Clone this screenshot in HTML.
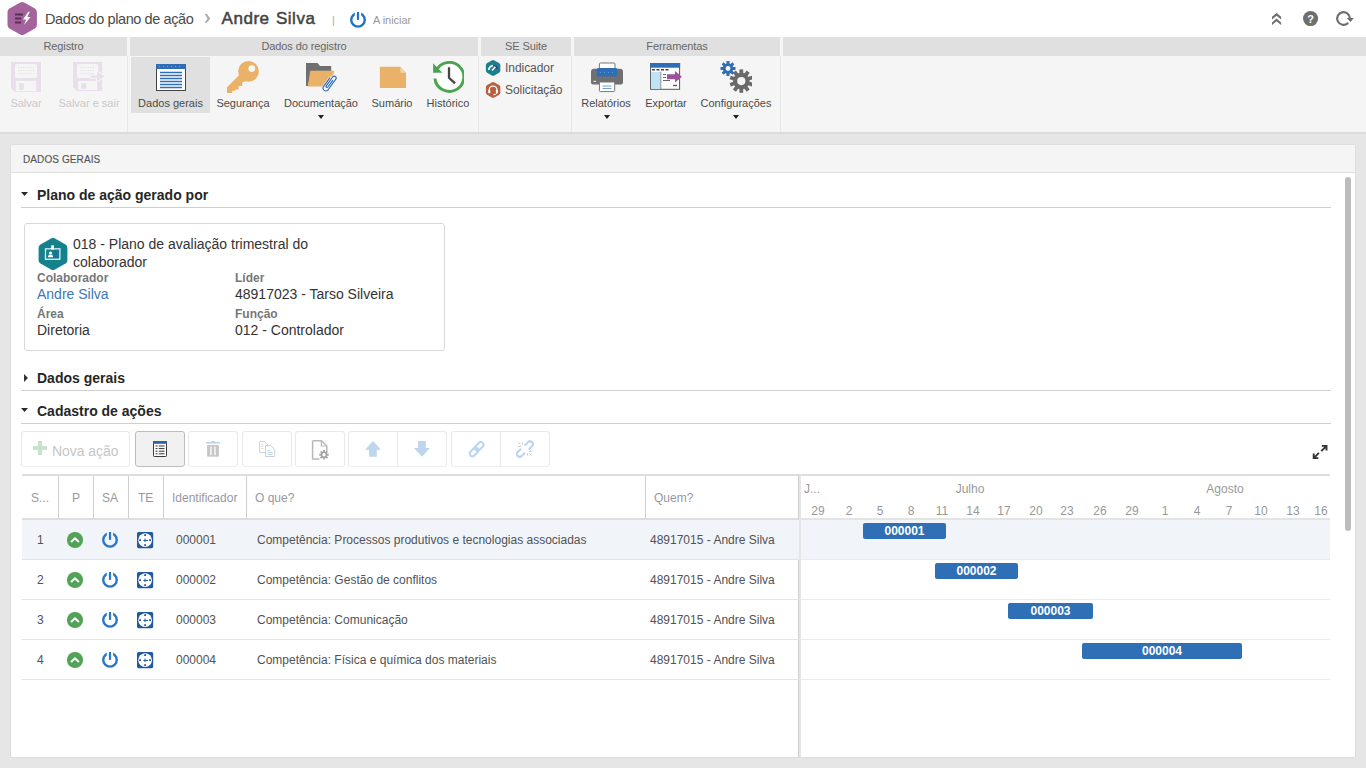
<!DOCTYPE html>
<html lang="pt-BR">
<head>
<meta charset="utf-8">
<title>Dados do plano de ação</title>
<style>
*{box-sizing:border-box;margin:0;padding:0}
html,body{width:1366px;height:768px;overflow:hidden}
body{background:#e6e6e6;font-family:"Liberation Sans",Arial,sans-serif;color:#333;position:relative;font-size:12px}
.abs{position:absolute}
/* top bar */
#top{position:absolute;left:0;top:0;width:1366px;height:37px;background:#fff}
#top .t1{position:absolute;left:45px;top:10px;font-size:14.5px;color:#4a4a4a;white-space:nowrap;line-height:18px;letter-spacing:-.4px}
#top .t2{position:absolute;left:221.5px;top:9px;font-size:17px;color:#444;-webkit-text-stroke:.5px #444;white-space:nowrap;line-height:20px;letter-spacing:.55px;word-spacing:1px}
#top .sep{position:absolute;left:332px;top:13px;font-size:11px;color:#aaa;line-height:14px}
#top .st{position:absolute;left:373px;top:13px;font-size:11px;color:#999;line-height:14px;letter-spacing:-.05px}
/* ribbon */
#rib{position:absolute;left:0;top:37px;width:1366px;height:95px;background:#f5f5f5}
#ribline{position:absolute;left:0;top:132px;width:1366px;height:2px;background:#dcdcdc}
.gh{position:absolute;top:0;height:19px;background:#e0e0e0;color:#666;font-size:11px;line-height:19px;text-align:center;letter-spacing:-.1px}
.gsep{position:absolute;top:19px;width:1px;height:76px;background:#e6e6e6}
.rb{position:absolute;top:20px;height:56px;text-align:center;font-size:11px;color:#4a4a4a;white-space:nowrap;letter-spacing:0}
.rb .lb{position:absolute;left:0;right:0;top:39px;line-height:14px}
.rb svg{position:absolute;left:50%;margin-left:-16px;top:4px;width:32px;height:32px}
.rb.dis{color:#c9c9c9}
.rb.sel{background:#e0e0e0}
.dd{position:absolute;top:78px;width:0;height:0;border-left:3px solid transparent;border-right:3px solid transparent;border-top:4px solid #222}
.sm{position:absolute;font-size:12px;color:#555;line-height:16px;white-space:nowrap;letter-spacing:-.05px}
/* panel */
#panel{position:absolute;left:10px;top:144px;width:1346px;height:614px;background:#fff;border:1px solid #dddddd;border-radius:2px}
#phead{position:absolute;left:0;top:0;width:1344px;height:28px;background:#f5f5f5;border-bottom:1px solid #dedede;font-size:10px;color:#555;-webkit-text-stroke:.15px #555;line-height:29px;padding-left:12px;letter-spacing:.1px}
.sec{position:absolute;left:21px;width:1310px;height:1px;background:#cfcfcf}
.sect{position:absolute;left:37px;font-size:14px;font-weight:bold;color:#262626;line-height:18px;white-space:nowrap}
.tri-d{position:absolute;width:7px;height:4px;background:#2a2a2a;clip-path:polygon(0 0,100% 0,50% 100%)}
.tri-r{position:absolute;width:0;height:0;border-top:4px solid transparent;border-bottom:4px solid transparent;border-left:4px solid #333}
#card{position:absolute;left:24px;top:223px;width:421px;height:128px;border:1px solid #d9d9d9;border-radius:3px;background:#fff}
.cl{position:absolute;font-size:12px;font-weight:bold;color:#777;line-height:14px;white-space:nowrap}
.cv{position:absolute;font-size:14px;color:#333;line-height:18px;white-space:nowrap}
/* toolbar */
.tb{position:absolute;top:431px;height:36px;border:1px solid #e9e9e9;border-bottom-color:#efefef;border-radius:3px;background:#fff}
/* grid */
.hl{position:absolute;background:#dedede}
.th{position:absolute;top:491px;font-size:12px;color:#969aa0;line-height:14px;white-space:nowrap}
.vs{position:absolute;top:476px;width:1px;height:42px;background:#cfcfcf}
.row{position:absolute;left:22px;width:777px;height:40px;border-bottom:1px solid #e4e4e4}
.td{position:absolute;font-size:12px;color:#525252;line-height:14px;white-space:nowrap}
.gl{position:absolute;font-size:12px;color:#999;line-height:14px;white-space:nowrap;text-align:center}
.bar{position:absolute;height:16px;background:#2e6fb5;border-radius:2px;color:#fff;font-size:12px;font-weight:bold;line-height:16px;text-align:center}
</style>
</head>
<body>
<div id="top">

  <svg class="abs" style="left:7px;top:1px" width="31" height="35" viewBox="0 0 31 35">
    <path d="M13.200 1.500 Q15.200 0.400 17.200 1.500 L27.900 7.600 Q29.900 8.800 29.900 11 V24 Q29.900 26.200 27.900 27.400 L17.200 33.500 Q15.200 34.600 13.200 33.500 L2.500 27.400 Q0.500 26.200 0.500 24 V11 Q0.500 8.800 2.500 7.600 Z" fill="#a4639c"/>
    <rect x="8" y="12.500" width="8" height="2" fill="#5c2f57"/>
    <rect x="8" y="16.500" width="6.300" height="2" fill="#5c2f57"/>
    <rect x="8" y="20.500" width="6.300" height="2" fill="#5c2f57"/>
    <path d="M21.200 10.800 L16 18.500 H19.200 L17 24 L23.600 16 H20.400 L22.800 10.800 Z" fill="#fff"/>
  </svg>
  <svg class="abs" style="left:204px;top:14px" width="8" height="10" viewBox="0 0 8 10"><path d="M0.600 0 L3 0 L6.200 4.400 L3 8.800 L0.600 8.800 L3.500 4.400 Z" fill="#adadad"/></svg>
  <svg class="abs" style="left:350px;top:12px" width="16" height="16" viewBox="0 0 16 16">
    <defs><clipPath id="pc"><path d="M0 0H4.840V8H11.100V0H16V16H0Z"/></clipPath></defs>
    <circle cx="8" cy="7.900" r="6.750" fill="none" stroke="#2273c4" stroke-width="2.400" clip-path="url(#pc)"/>
    <rect x="6.900" y="0" width="2.200" height="7.900" fill="#2273c4"/>
  </svg>
  <svg class="abs" style="left:1272px;top:13px" width="10" height="13" viewBox="0 0 10 13">
    <path d="M0 3.800 L4.550 -0.100 L9.100 3.800 V6.600 L4.550 2.700 L0 6.600 Z M0 9.500 L4.550 5.600 L9.100 9.500 V12.100 L4.550 8.300 L0 12.100 Z" fill="#6e6e6e"/>
  </svg>
  <svg class="abs" style="left:1302px;top:10px" width="17" height="17" viewBox="0 0 17 17">
    <circle cx="8.550" cy="8.550" r="7.550" fill="#6e6e6e"/>
    <text x="8.600" y="12.500" font-family="Liberation Sans, sans-serif" font-size="11" font-weight="bold" fill="#fff" text-anchor="middle">?</text>
  </svg>
  <svg class="abs" style="left:1335px;top:10px" width="20" height="18" viewBox="0 0 20 18">
    <path d="M14.900 8.530 A6.350 6.350 0 1 0 12.630 13.390" fill="none" stroke="#6e6e6e" stroke-width="2.200" stroke-linecap="round"/>
    <path d="M11.800 8 H18.800 L15.500 12 Z" fill="#6e6e6e"/>
  </svg>
  <div class="t1">Dados do plano de ação</div>
  <div class="t2">Andre Silva</div>
  <div class="sep">|</div>
  <div class="st">A iniciar</div>
</div>
<div id="rib">
  <div class="gh" style="left:0;width:127px">Registro</div>
  <div class="gh" style="left:130px;width:348px">Dados do registro</div>
  <div class="gh" style="left:481px;width:90px">SE Suite</div>
  <div class="gh" style="left:574px;width:206px">Ferramentas</div>
  <div class="gh" style="left:783px;width:583px"></div>

  <div class="gsep" style="left:127px"></div>
  <div class="gsep" style="left:478px"></div>
  <div class="gsep" style="left:571px"></div>
  <div class="gsep" style="left:780px"></div>

  <div class="rb dis" style="left:4px;width:44px">
    <svg viewBox="0 0 32 32"><path d="M1 1 H31 V31 H5 L1 27 Z" fill="#e9dfec"/><rect x="5" y="2.900" width="22" height="14" rx="2" fill="#f5f5f5"/><path d="M8 6.500H24M8 9.500H24M8 12.500H24" stroke="#e8e2ea" stroke-width="1" stroke-dasharray="1.500 1"/><rect x="5.700" y="19.900" width="20.500" height="10.300" fill="#f5f5f5"/><rect x="9" y="22.100" width="4.800" height="6.700" fill="#e9dfec"/></svg>
    <div class="lb">Salvar</div>
  </div>
  <div class="rb dis" style="left:52px;width:74px">
    <svg viewBox="0 0 34 32" style="left:20px;margin-left:0;width:34px"><path d="M1 1 H30.100 V30 H5 L1 26 Z" fill="#e9dfec"/><rect x="4.950" y="2.900" width="21.200" height="14" rx="2" fill="#f5f5f5"/><path d="M8 6.500H23M8 9.500H23M8 12.500H23" stroke="#e8e2ea" stroke-width="1" stroke-dasharray="1.500 1"/><rect x="6.100" y="19.900" width="19" height="9.100" fill="#f5f5f5"/><rect x="9.100" y="22.100" width="5.100" height="5.700" fill="#e9dfec"/><path d="M18 14 H24.500 V9.700 L33.200 15.400 L24.500 21.100 V17.300 H18 Z" fill="#e9dfec" stroke="#f5f5f5" stroke-width="1"/></svg>
    <div class="lb">Salvar e sair</div>
  </div>

  <div class="rb sel" style="left:131px;width:79px">
    <svg viewBox="0 0 32 32"><rect x="1.500" y="3.500" width="29" height="26" fill="#fff" stroke="#444" stroke-width="1"/><rect x="1" y="3" width="30" height="5" fill="#2f6db5"/><path d="M4 5.500H28" stroke="#6fa0d8" stroke-width="1" stroke-dasharray="1 3"/><path d="M5 11.500H27M5 14.500H27M5 17.500H27M5 20.500H27M5 23.500H27M5 26.500H27" stroke="#2f6db5" stroke-width="1.400"/></svg>
    <div class="lb">Dados gerais</div>
  </div>
  <div class="rb" style="left:212px;width:62px">
    <svg viewBox="0 0 32 32"><path d="M0 26.200 L13 13.200 L19.500 19.500 L15.200 21.500 V25 H11.700 V28.500 H8.200 V29.700 H5.200 V32 H0 Z" fill="#eab268"/><path d="M21.500 0 A10.400 10.400 0 1 0 21.500 20.800 A10.400 10.400 0 1 0 21.500 0 Z M24.800 4.200 A3.400 3.400 0 1 1 24.800 11 A3.400 3.400 0 1 1 24.800 4.200 Z" fill="#eab268" fill-rule="evenodd"/></svg>
    <div class="lb">Segurança</div>
  </div>
  <div class="rb" style="left:276px;width:90px">
    <svg viewBox="0 0 32 32"><path d="M1 2 H12.500 L15 5 H26.200 V11 H6 L3 25 H1 Z" fill="#707070"/><path d="M5.300 9.800 H29.200 L25.500 25.600 H2.800 Z" fill="#eab268"/><g transform="translate(24.700 21.800) rotate(36)" fill="none" stroke-linecap="round"><path d="M-2.800 -4 V6.500 A2.800 2.800 0 0 0 2.800 6.500 V-6.500 A1.900 1.900 0 0 0 -1 -6.500 V4.500 A1 1 0 0 0 1 4.500 V-3.500" stroke="#f5f5f5" stroke-width="2.600"/><path d="M-2.800 -4 V6.500 A2.800 2.800 0 0 0 2.800 6.500 V-6.500 A1.900 1.900 0 0 0 -1 -6.500 V4.500 A1 1 0 0 0 1 4.500 V-3.500" stroke="#2a66b5" stroke-width="1.100"/></g></svg>
    <div class="lb">Documentação</div>
  </div>
  <div class="dd" style="left:318px"></div>
  <div class="rb" style="left:366px;width:52px">
    <svg viewBox="0 0 32 32"><path d="M3.900 5.800 H24.400 L30 11.700 V27 H3.900 Z" fill="#eab268"/><path d="M24.400 5.800 L30 11.700 H24.400 Z" fill="#f3d6a8"/></svg>
    <div class="lb">Sumário</div>
  </div>
  <div class="rb" style="left:420px;width:56px">
    <svg viewBox="0 0 32 32"><circle cx="17.300" cy="15.900" r="14" fill="#fff"/><path d="M4.300 9.500 A14.500 14.500 0 1 1 2.900 17.500" fill="none" stroke="#4ba350" stroke-width="2.900"/><path d="M1.100 2.300 V11.800 H10.400 Z" fill="#4ba350"/><path d="M17 6.300 V16.800 L23 22.300" fill="none" stroke="#454545" stroke-width="2.300"/></svg>
    <div class="lb">Histórico</div>
  </div>

  <svg class="abs" style="left:485px;top:22px" width="16" height="18" viewBox="0 -0.500 16 18"><path d="M6.800 0.900 Q8.100 0.200 9.400 0.900 L14.100 3.600 Q15.300 4.300 15.300 5.700 V11.100 Q15.300 12.500 14.100 13.200 L9.400 15.900 Q8.100 16.600 6.800 15.900 L2.100 13.200 Q0.900 12.500 0.900 11.100 V5.700 Q0.900 4.300 2.100 3.600 Z" fill="#1c7f8c"/><path d="M3.800 10.500 A4.400 4.400 0 0 1 8.200 6.100" fill="none" stroke="#fff" stroke-width="1.600"/><path d="M8.200 6.100 A4.400 4.400 0 0 1 12.400 9.600" fill="none" stroke="#22409a" stroke-width="1.300"/><path d="M7 11 L10.300 7.200" stroke="#fff" stroke-width="1.400"/></svg>
  <div class="sm" style="left:505px;top:23px">Indicador</div>
  <svg class="abs" style="left:485px;top:44px" width="16" height="18" viewBox="0 -0.500 16 18"><path d="M6.800 0.900 Q8.100 0.200 9.400 0.900 L14.100 3.600 Q15.300 4.300 15.300 5.700 V11.100 Q15.300 12.500 14.100 13.200 L9.400 15.900 Q8.100 16.600 6.800 15.900 L2.100 13.200 Q0.900 12.500 0.900 11.100 V5.700 Q0.900 4.300 2.100 3.600 Z" fill="#bb5f42"/><path d="M4.200 10 V8.500 A3.900 3.900 0 0 1 12 8.500 V10" fill="none" stroke="#fff" stroke-width="1.300"/><rect x="3.300" y="8.500" width="2" height="3.200" rx=".5" fill="#fff"/><rect x="10.900" y="8.500" width="2" height="3.200" rx=".5" fill="#fff"/><path d="M11.800 11.500 Q11.300 13.300 8.300 13.300" fill="none" stroke="#fff" stroke-width="1"/></svg>
  <div class="sm" style="left:505px;top:45px">Solicitação</div>

  <div class="rb" style="left:576px;width:60px">
    <svg viewBox="0 0 32 32" style="margin-left:-15px"><rect x="8.400" y="2" width="15.600" height="7" rx="1" fill="#fff" stroke="#777" stroke-width="1"/><path d="M3 7.800 H29 A3 3 0 0 1 32 10.800 V21.500 A2 2 0 0 1 30 23.500 H2 A2 2 0 0 1 0 21.500 V10.800 A3 3 0 0 1 3 7.800 Z" fill="#707070"/><rect x="5.600" y="7" width="20.700" height="8.500" rx="1.500" fill="#2f6db5"/><path d="M9 11.500H24" stroke="#5d93d1" stroke-width="1" stroke-dasharray="1 3"/><rect x="2.500" y="19.800" width="2.500" height="1" fill="#fff"/><rect x="8.400" y="21" width="15.300" height="9.600" rx="1" fill="#fff" stroke="#777" stroke-width="1"/><path d="M11.500 25H20.500M11.500 27.500H20.500" stroke="#6fa0d8" stroke-width="1"/></svg>
    <div class="lb">Relatórios</div>
  </div>
  <div class="dd" style="left:604px"></div>
  <div class="rb" style="left:638px;width:56px">
    <svg viewBox="0 0 32 32"><rect x="0.600" y="2.500" width="29" height="25.800" fill="#fff" stroke="#555" stroke-width="1"/><rect x="0.100" y="2" width="30" height="4.700" fill="#2f6db5"/><rect x="1.100" y="11" width="9.400" height="16.800" fill="#bfe3f5"/><path d="M10.800 10.500V28" stroke="#777" stroke-width=".8"/><path d="M2 8.800H5M6.500 8.800H9.500M11 8.800H14M15.500 8.800H18.500" stroke="#444" stroke-width="1.600"/><path d="M13 13.500H16M13 16.500H16M13 19.500H20" stroke="#666" stroke-width="1"/><path d="M23 24.500H27" stroke="#555" stroke-width="1.400"/><path d="M17 13.300 H25 V10.100 L31.900 15.800 L25 21.500 V18.300 H17 Z" fill="#9d5198"/></svg>
    <div class="lb">Exportar</div>
  </div>
  <div class="rb" style="left:696px;width:80px">
    <svg viewBox="0 0 32 32"><g transform="translate(8 7.500)" fill="#2f6db5"><circle r="5.200"/><g><rect x="-1.500" y="-7.500" width="3" height="15"/><rect x="-1.500" y="-7.500" width="3" height="15" transform="rotate(45)"/><rect x="-1.500" y="-7.500" width="3" height="15" transform="rotate(90)"/><rect x="-1.500" y="-7.500" width="3" height="15" transform="rotate(135)"/></g><circle r="2.400" fill="#f5f5f5"/></g><g transform="translate(21.300 20.100)" fill="#6a6a6a"><circle r="8.300"/><g><rect x="-1.900" y="-11.700" width="3.800" height="23.400"/><rect x="-1.900" y="-11.700" width="3.800" height="23.400" transform="rotate(36)"/><rect x="-1.900" y="-11.700" width="3.800" height="23.400" transform="rotate(72)"/><rect x="-1.900" y="-11.700" width="3.800" height="23.400" transform="rotate(108)"/><rect x="-1.900" y="-11.700" width="3.800" height="23.400" transform="rotate(144)"/></g><circle r="4.100" fill="#f5f5f5"/></g></svg>
    <div class="lb">Configurações</div>
  </div>
  <div class="dd" style="left:733px"></div>
</div>
<div id="ribline"></div>
<div id="panel">
  <div id="phead">DADOS GERAIS</div>
</div>

<!-- sections -->
<div class="tri-d" style="left:21px;top:192px"></div>
<div class="sect" style="top:186px">Plano de ação gerado por</div>
<div class="sec" style="top:207px"></div>

<div id="card">
  <svg class="abs" style="left:13px;top:13px" width="30" height="34" viewBox="0 0 30 34">
    <path d="M13 1.400 Q15 0.300 17 1.400 L27.500 7.400 Q29.400 8.500 29.400 10.700 V23.300 Q29.400 25.500 27.500 26.600 L17 32.600 Q15 33.700 13 32.600 L2.500 26.600 Q0.600 25.500 0.600 23.300 V10.700 Q0.600 8.500 2.500 7.400 Z" fill="#14818c"/>
    <rect x="7.500" y="11.800" width="14.400" height="10.500" fill="none" stroke="#d9eef7" stroke-width="1.300"/>
    <rect x="13.200" y="8.300" width="2.800" height="4.300" fill="#fff"/>
    <circle cx="12.500" cy="16" r="1.500" fill="#fff"/>
    <path d="M9.900 20.300 Q9.900 17.600 12.500 17.600 Q15.100 17.600 15.100 20.300 Z" fill="#fff"/>
    <path d="M16.600 14.700H19M16.600 17.300H19M16.600 19.500H19" stroke="#2b55a8" stroke-width=".9"/>
  </svg>
  <div class="cv" style="left:48px;top:11px">018 - Plano de avaliação trimestral do</div>
  <div class="cv" style="left:48px;top:29px">colaborador</div>
  <div class="cl" style="left:12px;top:47px">Colaborador</div>
  <div class="cv" style="left:12px;top:61px;color:#3b78b4">Andre Silva</div>
  <div class="cl" style="left:12px;top:83px">Área</div>
  <div class="cv" style="left:12px;top:97px">Diretoria</div>
  <div class="cl" style="left:210px;top:47px">Líder</div>
  <div class="cv" style="left:210px;top:61px">48917023 - Tarso Silveira</div>
  <div class="cl" style="left:210px;top:83px">Função</div>
  <div class="cv" style="left:210px;top:97px">012 - Controlador</div>
</div>

<div class="tri-r" style="left:24px;top:374px"></div>
<div class="sect" style="top:369px">Dados gerais</div>
<div class="sec" style="top:390px"></div>

<div class="tri-d" style="left:21px;top:408px"></div>
<div class="sect" style="top:402px">Cadastro de ações</div>
<div class="sec" style="top:423px"></div>


<!-- toolbar -->
<div class="tb" style="left:21px;width:109px"></div>
<svg class="abs" style="left:33px;top:441px" width="14" height="14" viewBox="0 0 14 14"><path d="M5 0H9V5H14V9H9V14H5V9H0V5H5Z" fill="#c8e5cb"/></svg>
<div class="abs" style="left:52px;top:442px;font-size:14px;line-height:18px;color:#c6c6c6;white-space:nowrap;letter-spacing:-.05px">Nova ação</div>
<div class="tb" style="left:135px;width:50px;border-color:#bdbdbd;background:#f1f1f1"></div>
<svg class="abs" style="left:153px;top:441px" width="14" height="16" viewBox="0 0 14 16"><rect x="0.500" y="0.500" width="13" height="15" rx="0.800" fill="#fff" stroke="#3a3a3a" stroke-width="1"/><rect x="0" y="0" width="14" height="2.800" fill="#2a63af"/><path d="M2.500 5H4.500M5.700 5H11.500M2.500 7.600H4.500M5.700 7.600H11.500M2.500 10.200H4.500M5.700 10.200H11.500M2.500 12.800H4.500M5.700 12.800H11.500" stroke="#333" stroke-width="1"/></svg>
<div class="tb" style="left:188px;width:50px"></div>
<svg class="abs" style="left:206px;top:441px" width="14" height="16" viewBox="0 0 14 16"><rect x="5.300" y="0" width="3.900" height="1.200" fill="#c6d6e8"/><rect x="0" y="1" width="14" height="1.600" fill="#c0d4ea"/><rect x="1.100" y="4" width="11.800" height="11.700" fill="#c6c6c6"/><rect x="4.300" y="5.500" width="1.300" height="8.700" fill="#fff"/><rect x="8.300" y="5.500" width="1.300" height="8.700" fill="#fff"/></svg>
<div class="tb" style="left:242px;width:50px"></div>
<svg class="abs" style="left:259px;top:441px" width="17" height="16" viewBox="0 0 17 16"><path d="M0.500 0.500H5.500L8.500 3.500V11.500H0.500Z" fill="#fff" stroke="#d4d4d4" stroke-width="1"/><path d="M2 3.500H4.500M2 5.500H4.500M2 7.500H4.500" stroke="#dcdcdc"/><path d="M6.500 4.700H12L15.700 8.400V15.500H6.500Z" fill="#fff" stroke="#cfcfcf" stroke-width="1"/><path d="M8.500 9.500H11M8.500 11.500H13.700M8.500 13.500H13.700" stroke="#bcd6ee"/></svg>
<div class="tb" style="left:295px;width:50px"></div>
<svg class="abs" style="left:311px;top:439px" width="21" height="22" viewBox="0 0 21 22"><path d="M1.600 1.700H10.400L15.800 7V12M1.600 1.700V20H8.500" fill="none" stroke="#b9b9b9" stroke-width="1.500"/><path d="M10.400 1.700V7H15.800" fill="none" stroke="#b9b9b9" stroke-width="1.200"/><g transform="translate(13 15.750)"><circle r="3.300" fill="#a2a2a2"/><g fill="#a2a2a2"><rect x="-0.900" y="-4.800" width="1.800" height="9.600"/><rect x="-0.900" y="-4.800" width="1.800" height="9.600" transform="rotate(45)"/><rect x="-0.900" y="-4.800" width="1.800" height="9.600" transform="rotate(90)"/><rect x="-0.900" y="-4.800" width="1.800" height="9.600" transform="rotate(135)"/></g><circle r="1.700" fill="#fff"/></g></svg>
<div class="tb" style="left:348px;width:99px"></div>
<div class="abs" style="left:397px;top:432px;width:1px;height:34px;background:#e8e8e8"></div>
<svg class="abs" style="left:365px;top:441px" width="16" height="16" viewBox="0 0 16 16"><path d="M8 0L16 8.800H11.800V15.800H4.100V8.800H0Z" fill="#bdd6ee"/></svg>
<svg class="abs" style="left:414px;top:441px" width="16" height="16" viewBox="0 0 16 16"><path d="M8 15.800L16 7H11.800V0H4.100V7H0Z" fill="#bdd6ee"/></svg>
<div class="tb" style="left:451px;width:99px"></div>
<div class="abs" style="left:500px;top:432px;width:1px;height:34px;background:#e8e8e8"></div>
<svg class="abs" style="left:467px;top:440px" width="18" height="18" viewBox="0 0 18 18"><g fill="none" stroke="#bdd6ee" stroke-width="2.100"><rect x="2.100" y="9.300" width="9.800" height="5.400" rx="2.700" transform="rotate(-45 7 12)"/><rect x="7.300" y="3.700" width="9.800" height="5.400" rx="2.700" transform="rotate(-45 12.200 6.400)"/></g></svg>
<svg class="abs" style="left:516px;top:440px" width="18" height="18" viewBox="0 0 18 18"><g fill="none" stroke="#bdd6ee" stroke-width="2.200"><path d="M-2.600 -2.800 H2 A2.800 2.800 0 0 1 2 2.800 H-2.600" transform="translate(12.600 5.600) rotate(-45)"/><path d="M2.600 -2.800 H-2 A2.800 2.800 0 0 0 -2 2.800 H2.600" transform="translate(5.200 12.600) rotate(-45)"/></g><path d="M2.200 2.200L4.500 4.500M6.300 2.500V4.500M2.200 6.400H4.900M13.100 11.400H15.700M11.500 13.400V15.400M13.400 13.400L15.700 15.700" stroke="#c4c4c4" stroke-width="1"/></svg>
<svg class="abs" style="left:1312px;top:444px" width="16" height="16" viewBox="0 0 16 16"><path d="M9.800 1.900H14.500V6.600M14.500 1.900L9.300 7.100M1.700 9.400V14.100H6.400M1.700 14.100L6.900 8.900" fill="none" stroke="#333" stroke-width="1.900"/></svg>

<!-- grid -->
<div class="hl" style="left:22px;top:474px;width:1308px;height:2px"></div>
<div class="hl" style="left:22px;top:518px;width:777px;height:2px"></div>
<div class="hl" style="left:801px;top:518px;width:529px;height:2px;background:#e4e4e4"></div>
<div class="abs" style="left:798px;top:474px;width:3px;height:283px;background:#e6e6e6;border-left:1px solid #cfcfcf"></div>
<div class="vs" style="left:58px"></div><div class="vs" style="left:93px"></div><div class="vs" style="left:128px"></div><div class="vs" style="left:163px"></div><div class="vs" style="left:246px"></div><div class="vs" style="left:645px"></div>
<div class="th" style="left:31px">S...</div>
<div class="th" style="left:72px">P</div>
<div class="th" style="left:102px">SA</div>
<div class="th" style="left:138px">TE</div>
<div class="th" style="left:172px">Identificador</div>
<div class="th" style="left:255px">O que?</div>
<div class="th" style="left:654px">Quem?</div>
<div class="row" style="top:520px;background:#f1f4f9"></div>
<div class="abs" style="left:801px;top:520px;width:529px;height:40px;border-bottom:1px solid #ebebeb;background:#f1f4f9"></div>
<div class="td" style="left:37px;top:533px">1</div>
<svg class="abs" style="left:67px;top:532px" width="17" height="17" viewBox="0 0 17 17"><circle cx="8" cy="8" r="8.050" fill="#52a357"/><path d="M4.600 9.500L8 6.300L11.400 9.500" fill="none" stroke="#fff" stroke-width="2" stroke-linecap="round"/></svg>
<svg class="abs" style="left:102px;top:532px" width="16" height="16" viewBox="0 0 16 16"><circle cx="8" cy="7.900" r="6.750" fill="none" stroke="#2877c8" stroke-width="2.400" clip-path="url(#pc)"/><rect x="6.900" y="0" width="2.200" height="7.900" fill="#2877c8"/></svg>
<svg class="abs" style="left:137px;top:532px" width="17" height="17" viewBox="0 0 17 17"><rect x="0" y="0" width="16.200" height="16.200" rx="1.600" fill="#1f5a9f"/><circle cx="8.100" cy="8.100" r="6.900" fill="#fff"/><path d="M7.200 2.200H9V4H7.200ZM7.200 12.200H9V14H7.200ZM2.200 7.200H4V9H2.200ZM12.200 7.200H14V9H12.200Z" fill="#1f5a9f"/><path d="M6.400 8.400H11M8 6.600V10" stroke="#1f5a9f" stroke-width="1"/></svg>
<div class="td" style="left:176px;top:533px">000001</div>
<div class="td" style="left:257px;top:533px">Competência: Processos produtivos e tecnologias associadas</div>
<div class="td" style="left:650px;top:533px">48917015 - Andre Silva</div>
<div class="row" style="top:560px"></div>
<div class="abs" style="left:801px;top:560px;width:529px;height:40px;border-bottom:1px solid #ebebeb"></div>
<div class="td" style="left:37px;top:573px">2</div>
<svg class="abs" style="left:67px;top:572px" width="17" height="17" viewBox="0 0 17 17"><circle cx="8" cy="8" r="8.050" fill="#52a357"/><path d="M4.600 9.500L8 6.300L11.400 9.500" fill="none" stroke="#fff" stroke-width="2" stroke-linecap="round"/></svg>
<svg class="abs" style="left:102px;top:572px" width="16" height="16" viewBox="0 0 16 16"><circle cx="8" cy="7.900" r="6.750" fill="none" stroke="#2877c8" stroke-width="2.400" clip-path="url(#pc)"/><rect x="6.900" y="0" width="2.200" height="7.900" fill="#2877c8"/></svg>
<svg class="abs" style="left:137px;top:572px" width="17" height="17" viewBox="0 0 17 17"><rect x="0" y="0" width="16.200" height="16.200" rx="1.600" fill="#1f5a9f"/><circle cx="8.100" cy="8.100" r="6.900" fill="#fff"/><path d="M7.200 2.200H9V4H7.200ZM7.200 12.200H9V14H7.200ZM2.200 7.200H4V9H2.200ZM12.200 7.200H14V9H12.200Z" fill="#1f5a9f"/><path d="M6.400 8.400H11M8 6.600V10" stroke="#1f5a9f" stroke-width="1"/></svg>
<div class="td" style="left:176px;top:573px">000002</div>
<div class="td" style="left:257px;top:573px">Competência: Gestão de conflitos</div>
<div class="td" style="left:650px;top:573px">48917015 - Andre Silva</div>
<div class="row" style="top:600px"></div>
<div class="abs" style="left:801px;top:600px;width:529px;height:40px;border-bottom:1px solid #ebebeb"></div>
<div class="td" style="left:37px;top:613px">3</div>
<svg class="abs" style="left:67px;top:612px" width="17" height="17" viewBox="0 0 17 17"><circle cx="8" cy="8" r="8.050" fill="#52a357"/><path d="M4.600 9.500L8 6.300L11.400 9.500" fill="none" stroke="#fff" stroke-width="2" stroke-linecap="round"/></svg>
<svg class="abs" style="left:102px;top:612px" width="16" height="16" viewBox="0 0 16 16"><circle cx="8" cy="7.900" r="6.750" fill="none" stroke="#2877c8" stroke-width="2.400" clip-path="url(#pc)"/><rect x="6.900" y="0" width="2.200" height="7.900" fill="#2877c8"/></svg>
<svg class="abs" style="left:137px;top:612px" width="17" height="17" viewBox="0 0 17 17"><rect x="0" y="0" width="16.200" height="16.200" rx="1.600" fill="#1f5a9f"/><circle cx="8.100" cy="8.100" r="6.900" fill="#fff"/><path d="M7.200 2.200H9V4H7.200ZM7.200 12.200H9V14H7.200ZM2.200 7.200H4V9H2.200ZM12.200 7.200H14V9H12.200Z" fill="#1f5a9f"/><path d="M6.400 8.400H11M8 6.600V10" stroke="#1f5a9f" stroke-width="1"/></svg>
<div class="td" style="left:176px;top:613px">000003</div>
<div class="td" style="left:257px;top:613px">Competência: Comunicação</div>
<div class="td" style="left:650px;top:613px">48917015 - Andre Silva</div>
<div class="row" style="top:640px"></div>
<div class="abs" style="left:801px;top:640px;width:529px;height:40px;border-bottom:1px solid #ebebeb"></div>
<div class="td" style="left:37px;top:653px">4</div>
<svg class="abs" style="left:67px;top:652px" width="17" height="17" viewBox="0 0 17 17"><circle cx="8" cy="8" r="8.050" fill="#52a357"/><path d="M4.600 9.500L8 6.300L11.400 9.500" fill="none" stroke="#fff" stroke-width="2" stroke-linecap="round"/></svg>
<svg class="abs" style="left:102px;top:652px" width="16" height="16" viewBox="0 0 16 16"><circle cx="8" cy="7.900" r="6.750" fill="none" stroke="#2877c8" stroke-width="2.400" clip-path="url(#pc)"/><rect x="6.900" y="0" width="2.200" height="7.900" fill="#2877c8"/></svg>
<svg class="abs" style="left:137px;top:652px" width="17" height="17" viewBox="0 0 17 17"><rect x="0" y="0" width="16.200" height="16.200" rx="1.600" fill="#1f5a9f"/><circle cx="8.100" cy="8.100" r="6.900" fill="#fff"/><path d="M7.200 2.200H9V4H7.200ZM7.200 12.200H9V14H7.200ZM2.200 7.200H4V9H2.200ZM12.200 7.200H14V9H12.200Z" fill="#1f5a9f"/><path d="M6.400 8.400H11M8 6.600V10" stroke="#1f5a9f" stroke-width="1"/></svg>
<div class="td" style="left:176px;top:653px">000004</div>
<div class="td" style="left:257px;top:653px">Competência: Física e química dos materiais</div>
<div class="td" style="left:650px;top:653px">48917015 - Andre Silva</div>
<!-- gantt -->
<div class="gl" style="left:804px;top:482px;text-align:left">J...</div>
<div class="gl" style="left:940px;top:482px;width:60px">Julho</div>
<div class="gl" style="left:1195px;top:482px;width:60px">Agosto</div>
<div class="gl" style="left:803px;top:504px;width:30px">29</div>
<div class="gl" style="left:834px;top:504px;width:30px">2</div>
<div class="gl" style="left:865px;top:504px;width:30px">5</div>
<div class="gl" style="left:896px;top:504px;width:30px">8</div>
<div class="gl" style="left:927px;top:504px;width:30px">11</div>
<div class="gl" style="left:958px;top:504px;width:30px">14</div>
<div class="gl" style="left:989px;top:504px;width:30px">17</div>
<div class="gl" style="left:1021px;top:504px;width:30px">20</div>
<div class="gl" style="left:1052px;top:504px;width:30px">23</div>
<div class="gl" style="left:1085px;top:504px;width:30px">26</div>
<div class="gl" style="left:1117px;top:504px;width:30px">29</div>
<div class="gl" style="left:1150px;top:504px;width:30px">1</div>
<div class="gl" style="left:1182px;top:504px;width:30px">4</div>
<div class="gl" style="left:1214px;top:504px;width:30px">7</div>
<div class="gl" style="left:1246px;top:504px;width:30px">10</div>
<div class="gl" style="left:1278px;top:504px;width:30px">13</div>
<div class="gl" style="left:1306px;top:504px;width:30px">16</div>
<div class="bar" style="left:863px;top:523px;width:83px">000001</div>
<div class="bar" style="left:935px;top:563px;width:83px">000002</div>
<div class="bar" style="left:1008px;top:603px;width:85px">000003</div>
<div class="bar" style="left:1082px;top:643px;width:160px">000004</div>
<!-- scrollbar -->
<div class="abs" style="left:1345px;top:177px;width:6px;height:354px;background:#bcbcbc;border-radius:3px"></div>
</body>
</html>
